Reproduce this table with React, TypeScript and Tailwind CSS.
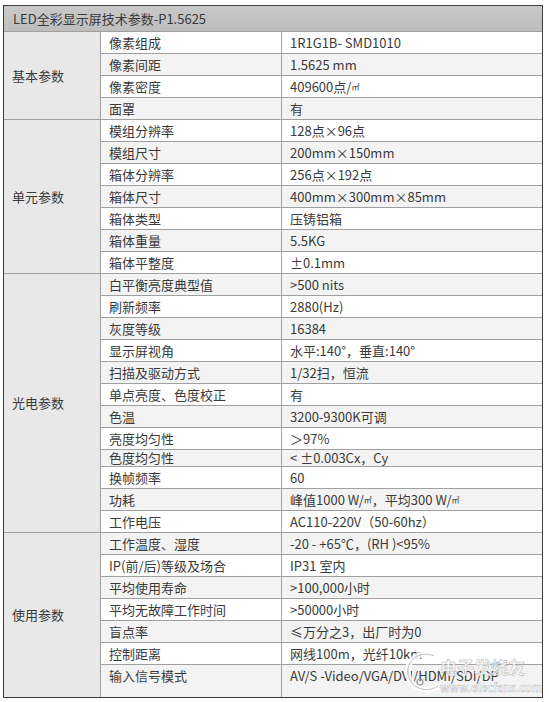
type Row = { name: string; value: React.ReactNode; h?: string; top?: boolean };
type Group = { label: string; rows: Row[] };

const Sq = () => <span className="text-[8px] align-top">㎡</span>;

const groups: Group[] = [
  {
    label: "基本参数",
    rows: [
      { name: "像素组成", value: "1R1G1B- SMD1010" },
      { name: "像素间距", value: "1.5625 mm" },
      { name: "像素密度", value: <>409600点/<Sq /></> },
      { name: "面罩", value: "有" },
    ],
  },
  {
    label: "单元参数",
    rows: [
      { name: "模组分辨率", value: "128点×96点" },
      { name: "模组尺寸", value: "200mm×150mm" },
      { name: "箱体分辨率", value: "256点×192点" },
      { name: "箱体尺寸", value: "400mm×300mm×85mm" },
      { name: "箱体类型", value: "压铸铝箱" },
      { name: "箱体重量", value: "5.5KG" },
      { name: "箱体平整度", value: "±0.1mm" },
    ],
  },
  {
    label: "光电参数",
    rows: [
      { name: "白平衡亮度典型值", value: ">500 nits" },
      { name: "刷新频率", value: "2880(Hz)" },
      { name: "灰度等级", value: "16384" },
      { name: "显示屏视角", value: "水平:140°，垂直:140°" },
      { name: "扫描及驱动方式", value: "1/32扫，恒流" },
      { name: "单点亮度、色度校正", value: "有" },
      { name: "色温", value: "3200-9300K可调" },
      { name: "亮度均匀性", value: "＞97%" },
      { name: "色度均匀性", value: "< ±0.003Cx，Cy", h: "h-[17px]" },
      { name: "换帧频率", value: "60" },
      { name: "功耗", value: <>峰值1000 W/<Sq />，平均300 W/<Sq /></> },
      { name: "工作电压", value: "AC110-220V（50-60hz）" },
    ],
  },
  {
    label: "使用参数",
    rows: [
      { name: "工作温度、湿度", value: "-20 - +65℃，(RH )<95%" },
      { name: "IP(前/后)等级及场合", value: "IP31 室内" },
      { name: "平均使用寿命", value: ">100,000小时" },
      { name: "平均无故障工作时间", value: ">50000小时" },
      { name: "盲点率", value: "≤万分之3，出厂时为0" },
      { name: "控制距离", value: "网线100m，光纤10km" },
      { name: "输入信号模式", value: "AV/S  -Video/VGA/DVI/HDMI/SDI/DP", h: "h-[33px]", top: true },
    ],
  },
];

// faint site watermark over the bottom-right corner
function Watermark() {
  return (
    <div className="pointer-events-none absolute left-[400px] top-[648px] flex items-center">
      <svg width="44" height="50" viewBox="0 0 44 50">
        <path d="M34 8 C20 2 6 12 8 26 C10 40 26 46 38 38" fill="none" stroke="#ffffff" strokeOpacity="0.85" strokeWidth="6" />
        <path d="M34 8 C20 2 6 12 8 26 C10 40 26 46 38 38" fill="none" stroke="#bdbdbd" strokeWidth="1" />
        <circle cx="20" cy="34" r="3" fill="none" stroke="#9a9a9a" strokeWidth="1.2" />
      </svg>
      <div className="ml-[-4px] mt-[4px] flex flex-col leading-none">
        <span
          className="text-[17px] font-bold text-white/80"
          style={{ WebkitTextStroke: "0.5px #b0b0b0" }}
        >
          电子发烧友
        </span>
        <span
          className="mt-[7px] text-[11px] font-bold text-white/80"
          style={{ WebkitTextStroke: "0.4px #b0b0b0" }}
        >
          www.elecfans.com
        </span>
      </div>
    </div>
  );
}

export default function App() {
  let idx = 0;
  return (
    <div
      className="relative min-h-[702px] w-[549px] bg-white pl-[3px] pt-[5px] text-[13px] text-[#3a3a3a]"
      style={{ fontFamily: '"Noto Sans CJK SC", "Noto Sans", sans-serif' }}
    >
      <div className="w-[540px] border border-[#3c3c3c]">
        {/* Title */}
        <div className="flex h-[26px] items-center border-b border-[#a0a0a0] bg-gradient-to-b from-[#c9c9c9] to-[#bdbdbd] pl-[9px] leading-none">
          LED全彩显示屏技术参数-P1.5625
        </div>

        {groups.map((g, gi) => (
          <div key={g.label} className={`flex ${gi > 0 ? "border-t border-[#a0a0a0]" : ""}`}>
            <div className="flex w-[97px] shrink-0 items-center border-r border-[#a0a0a0] bg-[#e8e8e8] pl-2">
              {g.label}
            </div>
            <div className="flex flex-1 flex-col">
              {g.rows.map((r, ri) => {
                const bg = idx++ % 2 === 0 ? "bg-white" : "bg-[#f3f3f3]";
                const h = r.h ?? (ri === 0 ? "h-[21px]" : "h-[22px]");
                const lead = r.h === "h-[17px]" ? "leading-[16px]" : "leading-[20px]";
                const align = r.top ? "items-start pt-[1px]" : "items-center";
                return (
                  <div
                    key={r.name}
                    className={`flex ${h} ${bg} ${ri > 0 ? "border-t border-[#a0a0a0]" : ""} ${lead}`}
                  >
                    <div className={`flex h-full w-[181px] shrink-0 ${align} whitespace-nowrap border-r border-[#a0a0a0] pl-2`}>
                      {r.name}
                    </div>
                    <div className={`flex h-full flex-1 ${align} overflow-hidden whitespace-nowrap pl-2`}>
                      <span>{r.value}</span>
                    </div>
                  </div>
                );
              })}
            </div>
          </div>
        ))}
      </div>
      <Watermark />
    </div>
  );
}
